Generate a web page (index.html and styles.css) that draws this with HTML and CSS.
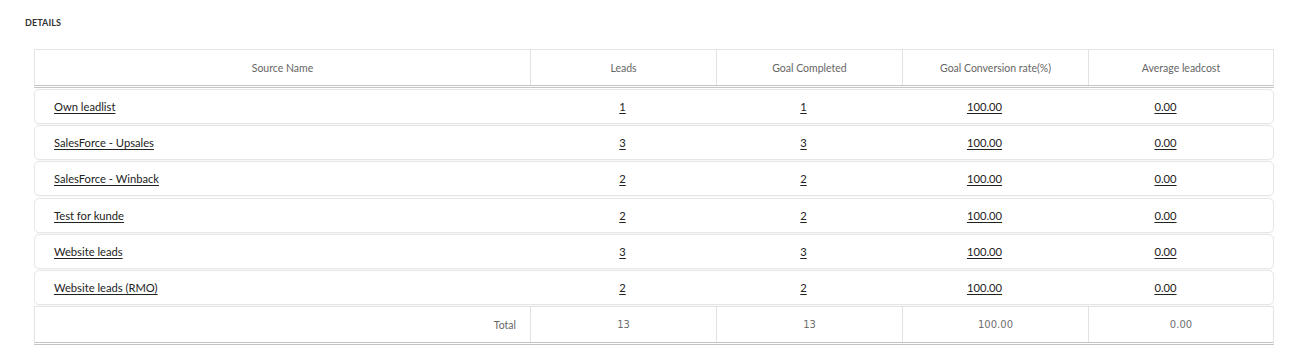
FILE: index.html
```html
<!DOCTYPE html>
<html>
<head>
<meta charset="utf-8">
<link rel="stylesheet" href="styles.css">
</head>
<body>
<div class="page">
  <div class="title">DETAILS</div>
  <div class="table">
    <div class="thead grid">
      <div class="cell">Source Name</div>
      <div class="cell">Leads</div>
      <div class="cell">Goal Completed</div>
      <div class="cell">Goal Conversion rate(%)</div>
      <div class="cell">Average leadcost</div>
    </div>
    <div class="tbody">
      <div class="row">
        <div class="cell name"><a href="#">Own leadlist</a></div>
        <div class="cell"><a href="#">1</a></div>
        <div class="cell"><a href="#">1</a></div>
        <div class="cell"><a href="#">100.00</a></div>
        <div class="cell"><a href="#">0.00</a></div>
      </div>
      <div class="row">
        <div class="cell name"><a href="#">SalesForce - Upsales</a></div>
        <div class="cell"><a href="#">3</a></div>
        <div class="cell"><a href="#">3</a></div>
        <div class="cell"><a href="#">100.00</a></div>
        <div class="cell"><a href="#">0.00</a></div>
      </div>
      <div class="row">
        <div class="cell name"><a href="#">SalesForce - Winback</a></div>
        <div class="cell"><a href="#">2</a></div>
        <div class="cell"><a href="#">2</a></div>
        <div class="cell"><a href="#">100.00</a></div>
        <div class="cell"><a href="#">0.00</a></div>
      </div>
      <div class="row">
        <div class="cell name"><a href="#">Test for kunde</a></div>
        <div class="cell"><a href="#">2</a></div>
        <div class="cell"><a href="#">2</a></div>
        <div class="cell"><a href="#">100.00</a></div>
        <div class="cell"><a href="#">0.00</a></div>
      </div>
      <div class="row">
        <div class="cell name"><a href="#">Website leads</a></div>
        <div class="cell"><a href="#">3</a></div>
        <div class="cell"><a href="#">3</a></div>
        <div class="cell"><a href="#">100.00</a></div>
        <div class="cell"><a href="#">0.00</a></div>
      </div>
      <div class="row">
        <div class="cell name"><a href="#">Website leads (RMO)</a></div>
        <div class="cell"><a href="#">2</a></div>
        <div class="cell"><a href="#">2</a></div>
        <div class="cell"><a href="#">100.00</a></div>
        <div class="cell"><a href="#">0.00</a></div>
      </div>
    </div>
    <div class="tfoot grid">
      <div class="cell total">Total</div>
      <div class="cell num">13</div>
      <div class="cell num">13</div>
      <div class="cell num">100.00</div>
      <div class="cell num">0.00</div>
    </div>
  </div>
</div>
</body>
</html>
```

FILE: styles.css
```css
html, body {
  margin: 0;
  padding: 0;
  background: #ffffff;
}

body {
  font-family: Lato, "Open Sans", sans-serif;
  color: #222;
}

.page {
  padding: 18px 0 0 25px;
}

.title {
  font-size: 9px;
  line-height: 10px;
  font-weight: 700;
  color: #333;
  letter-spacing: 0.1px;
}

.table {
  width: 1240px;
  margin: 21px 0 0 9px;
}

.grid {
  display: grid;
  grid-template-columns: 495px 186px 186px 186px 1fr;
  align-items: stretch;
}

.cell {
  display: flex;
  align-items: center;
  justify-content: center;
}

.thead {
  height: 35px;
  border: 1px solid #e4e4e4;
  border-bottom: 3px double #c4c4c4;
  font-size: 10.5px;
  color: #666;
}

.thead .cell + .cell {
  border-left: 1px solid #e2e2e2;
}

.tbody {
  display: flex;
  flex-direction: column;
  gap: 1.2px;
  padding: 1px 0 1.5px;
}

.row {
  display: grid;
  grid-template-columns: 497px 181px 181px 181px 181px;
  height: 33px;
  border: 1px solid #e6e6e6;
  border-radius: 5px;
  box-shadow: 0 1px 1px rgba(0, 0, 0, 0.03);
  font-size: 11.2px;
}

.row a {
  color: #222;
  text-decoration: underline;
  text-underline-offset: 2px;
}

.row .cell.name {
  justify-content: flex-start;
  padding-left: 19px;
}

.tfoot {
  height: 35px;
  border: 1px solid #e4e4e4;
  border-bottom: 3px double #c4c4c4;
  box-shadow: 0 1px 1px rgba(0, 0, 0, 0.05);
  font-size: 10.5px;
  color: #777;
}

.tfoot .cell + .cell {
  border-left: 1px solid #e2e2e2;
}

.tfoot .cell.total {
  justify-content: flex-end;
  padding-right: 14px;
  color: #666;
}

.tfoot .cell.num {
  font-family: "DejaVu Sans", sans-serif;
  font-size: 10px;
  color: #6f6f6f;
}
```
